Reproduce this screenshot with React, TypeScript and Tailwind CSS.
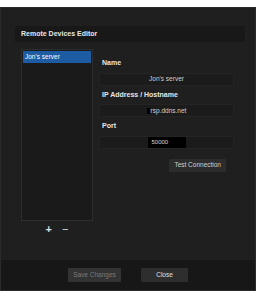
export default function App() {
  return (
    <div className="h-[300px] w-[257px] overflow-hidden bg-white pt-[7px] font-['Liberation_Sans',Arial,sans-serif]">
      <div className="flex h-[284px] w-[256px] flex-col border border-[#2b2b2b] bg-[#1f1f1f]">
        {/* title */}
        <div className="ml-[14px] mt-[18px] flex h-[16px] w-[230px] items-center bg-[#181818] pl-[6px] text-[7px] font-bold text-[#e6e6e6]">
          Remote Devices Editor
        </div>

        <div className="mt-[7px] flex">
          {/* device list */}
          <div className="ml-[20px] flex flex-col items-center">
            <div className="h-[172px] w-[72px] border border-[#2e2e2e] bg-[#1a1a1a] p-[1px]">
              <div className="flex h-[12px] items-center bg-[#1d5ca3] pl-[2px] text-[6.5px] text-white">
                Jon's server
              </div>
            </div>
            <div className="mt-[3px] flex items-center gap-[10px] text-[11px] leading-none text-[#dddddd]">
              <span className="font-bold">+</span>
              <span>−</span>
            </div>
          </div>

          {/* editor */}
          <div className="ml-[6px] flex w-[135px] flex-col pt-[9px]">
            <div className="pl-[3px] text-[7px] font-bold text-[#e6e6e6]">Name</div>
            <div className="mt-[4px] flex h-[13px] items-center justify-center rounded-[1px] border border-[#242424] bg-[#1b1b1b] text-[6.5px] text-[#d0d0d0]">
              Jon's server
            </div>
            <div className="mt-[4px] pl-[3px] text-[7px] font-bold text-[#e6e6e6]">
              IP Address / Hostname
            </div>
            <div className="mt-[4px] flex h-[13px] items-center justify-center rounded-[1px] border border-[#242424] bg-[#1b1b1b] text-[6.5px] text-[#d0d0d0]">
              <span className="mr-[1px] h-[6px] w-[3px] bg-black" />
              rsp.ddns.net
            </div>
            <div className="mt-[4px] pl-[3px] text-[7px] font-bold text-[#e6e6e6]">Port</div>
            <div className="mt-[4px] flex h-[13px] items-center justify-center rounded-[1px] border border-[#242424] bg-[#1b1b1b]">
              <div className="flex h-[11px] w-[38px] items-center bg-black pl-[4px] text-[6px] text-[#d8d8d8]">
                50000
              </div>
            </div>
            <div className="mt-[10px] flex justify-end pr-[8px]">
              <div className="flex h-[13px] items-center rounded-[1px] bg-[#2c2c2c] px-[5px] text-[6.5px] text-[#cfcfcf]">
                Test Connection
              </div>
            </div>
          </div>
        </div>

        {/* footer */}
        <div className="mt-auto flex h-[30px] items-center justify-center gap-[20px] bg-[#171717]">
          <div className="flex h-[14px] w-[53px] items-center justify-center rounded-[1px] bg-[#333333] text-[6.5px] text-[#7a7a7a]">
            Save Changes
          </div>
          <div className="flex h-[14px] w-[47px] items-center justify-center rounded-[1px] bg-[#2e2e2e] text-[6.5px] text-[#e0e0e0]">
            Close
          </div>
        </div>
      </div>
    </div>
  );
}
